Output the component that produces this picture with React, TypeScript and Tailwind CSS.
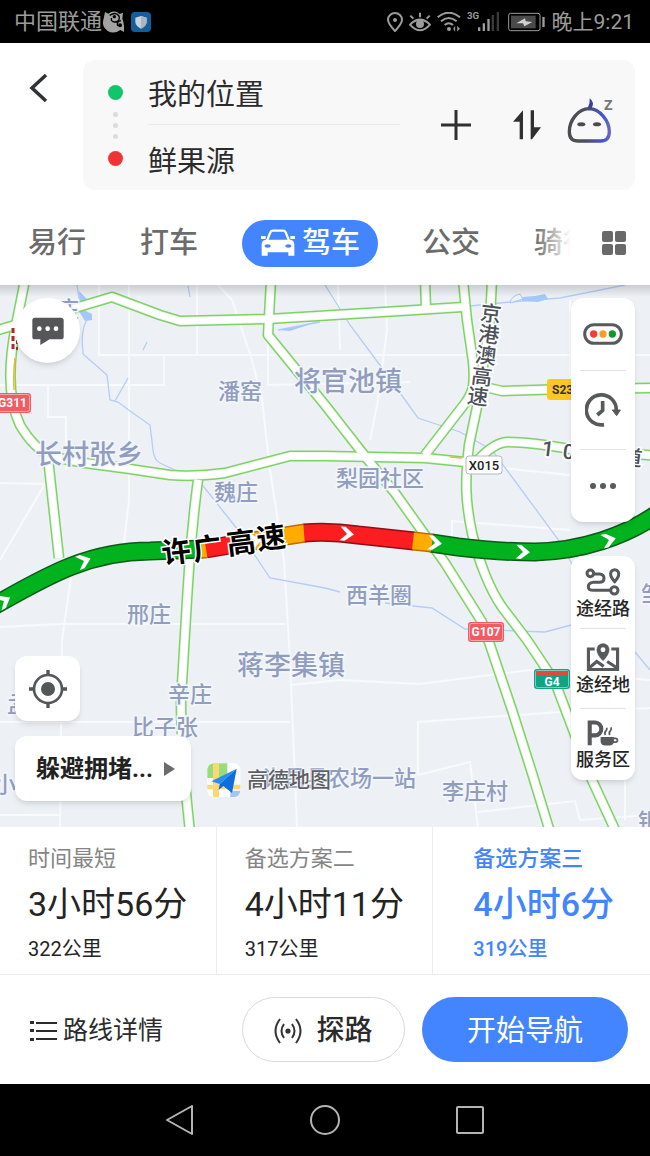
import { useState } from "react";
import clsx from "clsx";

const ROADS = [
  "M25 280 L16 325 C8 365 8 400 20 425 C30 442 38 448 48 456",
  "M-5 331 L15 325 L75 308 L112 297 L160 315 L180 321 L268 319 L400 311 L463 307",
  "M271 280 L268 335 L325 405 L368 460 L395 493 L445 563 L482 622 L491 648 L512 710 L532 773 L550 832",
  "M463 280 L467 320 L473 362 C475 385 473 392 466 402 L425 455",
  "M492 280 L490 320 L477 407 L469 445 C465 480 465 500 472 533 C478 560 490 590 502 607 L527 640 L555 682 L592 780 L616 832",
  "M48 456 L85 463 L130 469 L170 475 Q195 477 225 473 L290 456 L325 456 L425 458 L465 462 L478 460 Q495 442 508 442 Q530 442 570 449 L660 456",
  "M425 280 L426 308",
  "M48 458 L59 558",
  "M198 480 Q190 540 187 600 L181 700 Q181 750 190 832",
  "M485 387 L502 391 L570 389 L660 388",
];

const MINOR_ROADS = [
  "M99 285 V355 H650",
  "M129 285 V500 L122 560 L72 570 L62 640 L60 827",
  "M197 285 V355 M164 355 V385 L0 385 M48 385 V417 H66 V470",
  "M218 285 L232 300 L252 360 L262 400 L270 470 L284 560 L290 660 L297 827",
  "M268 335 V385 M268 385 L320 384 L410 382",
  "M338 285 L340 350 M385 285 L387 330 L378 400 L370 440",
  "M0 483 L45 484 M45 484 L0 560",
  "M0 627 L60 624 H285",
  "M0 722 H290 M60 815 H0",
  "M290 685 L340 680 L420 684 L530 670 L650 680",
  "M418 775 V722 L560 712 L650 708",
  "M418 775 L470 762 L478 827 M478 812 L575 801 L580 820 L650 815",
  "M452 540 V521 L570 530 M500 468 L570 475",
  "M570 300 V380 M625 720 V820",
];

const RIVERS = [
  "M77 285 L80 305 L88 318 Q80 330 83 352 L83 354 L107 375 L110 400 L118 402 L130 411 L150 425 L153 450 Q154 460 160 463 L200 482 L238 530 L258 560 L270 578 L325 588",
  "M115 401 L128 378 M143 350 L147 342 M188 286 L190 297",
  "M325 285 L350 325 L385 372 L418 418 L460 432 L492 450 L560 542 L578 575 M635 652 L650 670",
  "M430 310 L510 302 L560 298 L625 285",
  "M278 330 L320 322",
  "M325 588 L340 592 M385 603 L432 608 L465 629 L545 632 L575 624",
];

const ROUTE = [
  { d: "M-10 608 C40 580 85 551 150 551 L203 549", color: "#00b31e", edge: "#0a5a18" },
  { d: "M431 543 L458 547 Q500 552 535 552 C580 551 625 537 660 512", color: "#00b31e", edge: "#0a5a18" },
  { d: "M202 549 L207 549", color: "#ffab00", edge: "#c06c00" },
  { d: "M206 549 L248 542", color: "#fb1d20", edge: "#8d1014" },
  { d: "M247 542 L305 533", color: "#ffab00", edge: "#c06c00" },
  { d: "M304 533 Q330 531 358 535 L414 541", color: "#fb1d20", edge: "#8d1014" },
  { d: "M413 541 L432 543", color: "#ffab00", edge: "#c06c00" },
];

const ARROWS = [
  [4, 601, -30],
  [84, 561, -20],
  [255, 541, -10],
  [347, 534, 5],
  [435, 543, 6],
  [523, 552, 3],
  [609, 540, -14],
];

const PLACES = [
  { name: "将官池镇", x: 294, y: 391, big: true },
  { name: "长村张乡", x: 35, y: 464, big: true },
  { name: "蒋李集镇", x: 237, y: 675, big: true },
  { name: "潘窑", x: 218, y: 399 },
  { name: "魏庄", x: 214, y: 500 },
  { name: "梨园社区", x: 336, y: 486 },
  { name: "西羊圈", x: 346, y: 603 },
  { name: "邢庄", x: 127, y: 622 },
  { name: "辛庄", x: 168, y: 702 },
  { name: "比子张", x: 132, y: 735 },
  { name: "李庄村", x: 442, y: 799 },
  { name: "许昌县农场一站", x: 262, y: 786 },
  { name: "孟庄", x: 7, y: 712 },
  { name: "小V", x: -6, y: 792 },
  { name: "庄", x: 57, y: 317 },
  { name: "邹", x: 641, y: 602 },
  { name: "银", x: 638, y: 829 },
];

const ROAD_NAMES = [
  { char: "京", x: 491, y: 313 },
  { char: "港", x: 489, y: 334 },
  { char: "澳", x: 486, y: 355 },
  { char: "高", x: 482, y: 376 },
  { char: "速", x: 478, y: 396 },
  { char: "1", x: 548, y: 448 },
  { char: "0", x: 569, y: 451 },
  { char: "道", x: 632, y: 457 },
];

const ROUTE_NAME = [
  { char: "许", x: 176, y: 551 },
  { char: "广", x: 207, y: 548 },
  { char: "高", x: 241, y: 542 },
  { char: "速", x: 271, y: 537 },
];

const PLANS = [
  { label: "时间最短", time: "3小时56分", distance: "322公里" },
  { label: "备选方案二", time: "4小时11分", distance: "317公里" },
  { label: "备选方案三", time: "4小时6分", distance: "319公里" },
];

const Shield = ({ x, y, w, text, fill }: { x: number; y: number; w: number; text: string; fill: string }) => (
  <g>
    <rect x={x} y={y} width={w} height={20} rx={3} fill={fill} />
    <rect x={x + 1.5} y={y + 1.5} width={w - 3} height={17} rx={2} fill="none" stroke="#fff" strokeOpacity={0.45} />
    <text x={x + w / 2} y={y + 14} textAnchor="middle" fontSize={12} fontWeight={700} fill="#fff">
      {text}
    </text>
  </g>
);

const MapCanvas = () => (
  <svg
    className="absolute inset-0 h-full w-full"
    viewBox="0 285 650 542"
    preserveAspectRatio="xMidYMid slice"
    role="img"
    aria-label="路线地图"
  >
    <rect x={-400} y={0} width={1500} height={1200} fill="#edf1f6" />
    <g fill="none" stroke="#f8fafc" strokeWidth={2}>
      {MINOR_ROADS.map((d) => (
        <path key={d} d={d} />
      ))}
    </g>
    <g fill="none" stroke="#b4cdf6" strokeWidth={1.3}>
      {RIVERS.map((d) => (
        <path key={d} d={d} />
      ))}
    </g>
    <g fill="#a5c8fa">
      <path d="M79 291 L88 300 L84 310 L92 314 L92 320 L85 321 L80 313 Z" />
      <path d="M278 330 L290 328 L320 321 L290 331 Z" />
      <path d="M522 297 L535 296 L545 294 L548 299 L538 302 L522 301 Z" />
      <path d="M510 303 Q511 296 520 294 L523 299 Z" fill="#edf1f6" stroke="#a9c6f5" />
    </g>
    <g fill="none" strokeLinejoin="round">
      {ROADS.map((d) => (
        <path key={d} d={d} stroke="#7fd364" strokeWidth={11} />
      ))}
      {ROADS.map((d) => (
        <path key={d} d={d} stroke="#f1f6f3" strokeWidth={8} />
      ))}
      {ROADS.map((d) => (
        <path key={d} d={d} stroke="#fff" strokeWidth={6} />
      ))}
    </g>
    <path d="M15 358 Q13 375 14 390 M450 457 L462 458" fill="none" stroke="#f7b52c" strokeWidth={1.5} />
    <path d="M13 328 V350" stroke="#b3272d" strokeWidth={3} strokeDasharray="5 3" />
    <path d="M17 340 V350" stroke="#b3272d" strokeWidth={2} strokeDasharray="4 3" />

    <g fill="none">
      {ROUTE.map((s) => (
        <path key={s.d} d={s.d} stroke={s.edge} strokeWidth={19} />
      ))}
      {ROUTE.map((s) => (
        <path key={s.d} d={s.d} stroke={s.color} strokeWidth={16} />
      ))}
    </g>
    <g fill="#fff">
      {ARROWS.map(([x, y, r]) => (
        <path key={x} d="M-7 -7 H-2 L7 0 L-2 7 H-7 L0 0 Z" transform={`translate(${x} ${y}) rotate(${r})`} />
      ))}
    </g>

    <g fill="#919dbf" stroke="#f3f6fa" strokeWidth={3} paintOrder="stroke" fontWeight={500}>
      {PLACES.map((p) => (
        <text key={p.name} x={p.x} y={p.y} fontSize={p.big ? 27 : 22}>
          {p.name}
        </text>
      ))}
    </g>
    <g fill="#4d515a" stroke="#fff" strokeWidth={3} paintOrder="stroke" fontSize={21} fontWeight={500} textAnchor="middle">
      {ROAD_NAMES.map((c) => (
        <text key={c.char} x={c.x} y={c.y + 8} transform={`rotate(7 ${c.x} ${c.y})`}>
          {c.char}
        </text>
      ))}
    </g>
    <g fill="#000" stroke="#fff" strokeWidth={3} paintOrder="stroke" fontSize={29} fontWeight={700} textAnchor="middle">
      {ROUTE_NAME.map((c) => (
        <text key={c.char} x={c.x} y={c.y + 11} transform={`rotate(-7 ${c.x} ${c.y})`}>
          {c.char}
        </text>
      ))}
    </g>

    <Shield x={-6} y={393} w={37} text="G311" fill="#f35b63" />
    <Shield x={468} y={622} w={36} text="G107" fill="#f35b63" />
    <Shield x={534} y={669} w={36} text="" fill="#12a386" />
    <path d="M536 671 H568 V676 H536 Z" fill="#e04a3c" />
    <text x={552} y={686} textAnchor="middle" fontSize={12} fontWeight={700} fill="#fff">
      G4
    </text>
    <rect x={547} y={379} width={40} height={21} rx={3} fill="#fdc526" />
    <text x={552} y={394} fontSize={12} fontWeight={700} fill="#333">
      S237
    </text>
    <rect x={466} y={456} width={36} height={18} rx={3} fill="#fff" stroke="#b5b8bd" />
    <text x={484} y={470} textAnchor="middle" fontSize={13} fontWeight={500} fill="#222">
      X015
    </text>
  </svg>
);

const StatusBar = () => (
  <div className="flex h-[43px] items-center justify-between bg-black pr-4 pl-[14px] text-[#9c9c9c]">
    <div className="flex items-center">
      <span className="text-[22px] leading-6">中国联通</span>
      <svg width="22" height="22" viewBox="312 33 66 66" className="ml-[1px]">
        <path
          d="M318 36 L328 41 Q345 28 362 42 L372 38 L370 56 Q376 68 375 96 L364 90 Q344 104 325 92 Q308 80 313 60 Z"
          fill="#a3a3a3"
        />
        <path
          d="M332 46 Q350 34 360 48 Q364 66 346 66 Q334 64 338 54 M366 62 Q352 64 356 78"
          fill="none"
          stroke="#000"
          strokeWidth="4"
        />
        <circle cx="346" cy="50" r="5" fill="#000" />
        <circle cx="363" cy="76" r="6" fill="#000" />
      </svg>
      <svg width="20" height="20" viewBox="0 0 60 60" className="ml-[6px]">
        <rect width="60" height="60" rx="12" fill="#135f9c" />
        <path d="M30 12 L47 17 V30 Q46 43 30 50 Q14 43 13 30 V17 Z" fill="#c9d2da" />
        <path d="M30 12 L47 17 V30 Q46 43 30 50 Z" fill="#a9b5c0" />
      </svg>
    </div>
    <div className="flex items-center">
      <svg width="16" height="20" viewBox="184 36 48 60" fill="none" stroke="currentColor" strokeWidth="6">
        <path d="M208 93 Q187 70 187 59 A21 20 0 0 1 229 59 Q229 70 208 93 Z" />
        <circle cx="208" cy="60" r="6" fill="currentColor" stroke="none" />
      </svg>
      <svg width="22" height="20" viewBox="252 36 66 60" fill="none" stroke="currentColor" strokeWidth="6" className="ml-[6px]">
        <path d="M255 74 Q285 44 315 74 Q285 108 255 74 Z M285 52 V38 M265 56 L256 47 M305 56 L314 47" />
        <circle cx="285" cy="72" r="12" fill="currentColor" stroke="none" />
      </svg>
      <svg width="24" height="20" viewBox="335 36 72 60" fill="none" stroke="currentColor" strokeWidth="6" className="ml-[6px]">
        <path d="M337 52 Q370 24 404 52 M347 64 Q370 44 394 64 M358 75 Q370 64 383 75" />
        <circle cx="371" cy="87" r="6" fill="currentColor" stroke="none" />
        <path d="M384 86 L389 79 V94 Z M396 79 V94 L403 86 Z" fill="currentColor" strokeWidth="1" />
      </svg>
      <svg width="33" height="22" viewBox="424 33 99 66" className="ml-[6px]">
        <text x="424" y="58" fontSize="29" fontWeight="700" fill="currentColor" fontFamily="Roboto">
          3G
        </text>
        <path d="M457 93 V82 H464 V93 Z M471 93 V70 H478 V93 Z M485 93 V57 H492 V93 Z" fill="currentColor" />
        <path d="M498 93 V45 H505 V93 Z M513 93 V36 H520 V93 Z" fill="#3a3a3a" />
      </svg>
      <svg width="38" height="20" viewBox="547 36 114 60" className="ml-[8px]">
        <rect x="549" y="40" width="94" height="52" rx="6" fill="none" stroke="currentColor" strokeWidth="3" />
        <rect x="556" y="47" width="74" height="38" fill="#4a4a4a" />
        <path d="M650 51 H657 V81 H650 Z" fill="currentColor" />
        <path d="M572 70 L598 55 L600 64 L620 66 L596 79 L592 70 Z" fill="#d0d0d0" />
      </svg>
      <span className="ml-[6px] text-[21px] leading-6">晚上9:21</span>
    </div>
  </div>
);

const CarIcon = () => (
  <svg width="36" height="28" viewBox="784 86 102 84" fill="none">
    <path d="M800 126 L812 96 Q814 91 820 91 H850 Q856 91 858 96 L870 126" stroke="#fff" strokeWidth="7" />
    <path
      d="M784 107 H798 V116 H784 Z M872 107 H886 V116 H872 Z M798 118 H872 Q884 120 884 132 V166 H866 V156 H804 V166 H786 V132 Q786 120 798 118 Z"
      fill="#fff"
    />
    <ellipse cx="804" cy="137" rx="9" ry="5" fill="#4285ff" />
    <ellipse cx="866" cy="137" rx="9" ry="5" fill="#4285ff" />
  </svg>
);

const RouteForm = () => (
  <div className="flex pt-[17px] pr-[15px]">
    <button type="button" aria-label="返回" className="flex h-[58px] w-[83px] shrink-0 items-center pl-[28px]">
      <svg width="20" height="32" viewBox="0 0 20 32" fill="none" stroke="#303236" strokeWidth="3.5">
        <path d="M18 2 L4 15 L18 28" />
      </svg>
    </button>
    <div className="flex h-[130px] min-w-0 flex-1 items-center rounded-xl bg-[#f8f8f8] pr-[22px] pl-[25px]">
      <div className="flex shrink-0 flex-col items-center">
        <span className="h-[15px] w-[15px] rounded-full bg-[#12c46b]" />
        <div className="my-[12px] flex flex-col gap-[6px]">
          <span className="h-[5px] w-[5px] rounded-full bg-[#dcdcdc]" />
          <span className="h-[5px] w-[5px] rounded-full bg-[#dcdcdc]" />
          <span className="h-[5px] w-[5px] rounded-full bg-[#dcdcdc]" />
        </div>
        <span className="h-[15px] w-[15px] rounded-full bg-[#f23336]" />
      </div>
      <div className="ml-[25px] min-w-0 flex-1 text-[29px] text-[#2b2b2d]">
        <input
          aria-label="起点"
          defaultValue="我的位置"
          className="block h-[65px] w-full border-b border-[#e9e9e9] bg-transparent outline-none"
        />
        <input
          aria-label="终点"
          defaultValue="鲜果源"
          className="block h-[65px] w-full bg-transparent pt-[2px] outline-none"
        />
      </div>
      <div className="ml-[41px] flex items-center">
        <button type="button" aria-label="添加途经点">
          <svg width="30" height="30" viewBox="0 0 30 30" stroke="#303030" strokeWidth="3">
            <path d="M15 0 V30 M0 15 H30" />
          </svg>
        </button>
        <button type="button" aria-label="交换起终点" className="ml-[42px]">
          <svg width="28" height="30" viewBox="562 329 84 90" fill="#303030">
            <path d="M592 330 V417 H582 V364 H562 Z" />
            <path d="M615 330 H625 V381 H646 L619 417 H615 Z" />
          </svg>
        </button>
        <button type="button" aria-label="语音助手" className="ml-[26px] pb-[8px]">
          <svg width="46" height="46" viewBox="724 293 138 138" fill="none">
            <defs>
              <linearGradient id="bot" x1="0" x2="1">
                <stop offset="0" stopColor="#4c4c50" />
                <stop offset="0.45" stopColor="#4f4f66" />
                <stop offset="0.85" stopColor="#4253e0" />
                <stop offset="1" stopColor="#6a66b8" />
              </linearGradient>
            </defs>
            <path
              d="M790 325 C822 326 851 360 851 394 C851 413 843 422 824 422 H758 C739 422 731 412 731 394 C731 360 758 325 790 325 Z"
              stroke="url(#bot)"
              strokeWidth="10"
            />
            <path d="M786 324 Q794 310 792 294 Q808 306 798 324 Z" fill="#3b3f9c" />
            <ellipse cx="767" cy="372" rx="12" ry="6" fill="#4b4b50" />
            <ellipse cx="814" cy="372" rx="12" ry="6" fill="#4b4b50" />
            <text x="834" y="330" fontSize="54" fontWeight="500" fontFamily="Roboto" fill="#777">
              z
            </text>
          </svg>
        </button>
      </div>
    </div>
  </div>
);

const ModeTabs = () => {
  const [mode, setMode] = useState("驾车");

  return (
    <div className="relative flex flex-1 items-center pt-[11px]">
      <nav className="flex min-w-0 flex-1 items-center gap-[34px] overflow-hidden pl-[18px]">
        {["易行", "打车", "驾车", "公交", "骑行"].map((tab) => (
          <button
            key={tab}
            type="button"
            onClick={() => setMode(tab)}
            className={clsx(
              "flex h-[47px] shrink-0 items-center gap-[6px] text-[29px] leading-[46px] font-medium",
              mode === tab ? "rounded-full bg-[#4285ff] px-[18px] text-white" : "px-[10px] text-[#6c6c6c]",
            )}
          >
            {tab === "驾车" && <CarIcon />}
            {tab}
          </button>
        ))}
      </nav>
      <div className="relative flex w-[79px] shrink-0 justify-end bg-white pr-[24px]">
        <span className="absolute -top-3 right-full h-12 w-9 bg-linear-to-r from-white/0 to-white" />
        <button type="button" aria-label="更多出行方式">
          <svg width="24" height="24" viewBox="0 0 24 24" fill="#696969">
            <rect width="11" height="11" rx="2" />
            <rect x="13" width="11" height="11" rx="2" />
            <rect y="13" width="11" height="11" rx="2" />
            <rect x="13" y="13" width="11" height="11" rx="2" />
          </svg>
        </button>
      </div>
    </div>
  );
};

const MapTools = () => (
  <div className="absolute top-[13px] right-[15px] flex w-[64px] flex-col gap-[34px] text-[#58595b]">
    <div className="flex flex-col rounded-xl bg-white px-[9px] shadow-md">
      <button type="button" aria-label="实时路况" className="flex h-[72px] items-center justify-center">
        <svg width="40" height="22" viewBox="774 369 120 66">
          <rect x="779" y="374" width="110" height="56" rx="28" fill="none" stroke="currentColor" strokeWidth="9" />
          <circle cx="806" cy="402" r="11" fill="#ee3f32" />
          <circle cx="834" cy="402" r="11" fill="#fb9a2c" />
          <circle cx="862" cy="402" r="11" fill="#10982c" />
        </svg>
      </button>
      <button type="button" aria-label="出发时间" className="flex h-[80px] items-center justify-center border-y border-[#e3e3e3]">
        <svg width="36" height="36" viewBox="782 576 108 108" fill="none" stroke="currentColor" strokeWidth="11">
          <path d="M839 674 A45 45 0 1 1 876 630" />
          <path d="M864 630 H888 L877 647 Z" fill="currentColor" strokeWidth="3" />
          <path d="M835 603 V631 L819 645" />
        </svg>
      </button>
      <button type="button" aria-label="更多" className="flex h-[72px] items-center justify-center">
        <svg width="26" height="6" viewBox="0 0 26 6" fill="currentColor">
          <circle cx="3" cy="3" r="3" />
          <circle cx="13" cy="3" r="3" />
          <circle cx="23" cy="3" r="3" />
        </svg>
      </button>
    </div>

    <div className="flex flex-col rounded-xl bg-white text-[18px] leading-[22px] font-medium shadow-md">
      <button type="button" className="flex h-[72px] flex-col items-center pt-[12px]">
        <svg width="36" height="28" viewBox="781 413 108 84" fill="none" stroke="currentColor" strokeWidth="9">
          <circle cx="797" cy="429" r="10" />
          <path d="M807 431 H824 Q838 432 838 444 Q838 456 824 456 H806 Q791 458 791 469 Q791 480 806 480 H856" />
          <circle cx="869" cy="480" r="11" />
          <path d="M870 454 Q857 440 858 430 A12 12 0 0 1 882 430 Q883 440 870 454 Z" />
        </svg>
        <span className="mt-[2px] text-[#262626]">途经路</span>
      </button>
      <button type="button" className="flex h-[80px] flex-col items-center">
        <span className="mb-[13px] h-px w-[46px] bg-[#e3e3e3]" />
        <svg width="34" height="30" viewBox="787 6 98 86" fill="none" stroke="currentColor" strokeWidth="9">
          <path d="M812 26 H794 V85 H878 V26 H860 M794 82 L818 62 L838 76 M848 62 L876 80" />
          <path d="M836 60 Q818 42 818 28 A18 18 0 0 1 854 28 Q854 42 836 60 Z" fill="currentColor" strokeWidth="1" />
          <circle cx="836" cy="28" r="7" fill="#fff" stroke="none" />
        </svg>
        <span className="mt-[2px] text-[#262626]">途经地</span>
      </button>
      <button type="button" className="flex h-[72px] flex-col items-center">
        <span className="mb-[10px] h-px w-[46px] bg-[#e3e3e3]" />
        <svg width="32" height="28" viewBox="788 236 94 82" fill="none" stroke="currentColor" strokeWidth="12">
          <path d="M796 313 V246 H812 A18 19 0 0 1 812 284 H796" />
          <path d="M828 289 H867 V302 Q866 314 854 314 H841 Q829 314 828 302 Z" fill="currentColor" stroke="none" />
          <path d="M866 293 H872 A5 5 0 0 1 872 304 H864 M842 283 Q838 276 844 270 Q848 265 845 262 M855 283 Q851 276 857 270 Q861 264 858 260" strokeWidth="5" />
        </svg>
        <span className="mt-[2px] text-[#262626]">服务区</span>
      </button>
    </div>
  </div>
);

const AmapLogo = () => (
  <div className="flex items-center">
    <svg width="34" height="34" viewBox="622 365 102 102">
      <rect x="623" y="366" width="99" height="101" rx="18" fill="#fff" />
      <path d="M641 366 H683 V400 L660 410 H623 V384 Q625 368 641 366 Z" fill="#98dc7c" />
      <path d="M640 366 H658 V467 H640 Z M623 430 H722 V444 H623 Z" fill="#fbd776" />
      <path d="M692 448 H722 Q720 465 704 467 H692 Z" fill="#a5c3f5" />
      <path d="M711 382 L635 420 L660 428 Z" fill="#2b8cf0" />
      <path d="M711 382 L660 428 L657 446 L671 434 L697 455 Z" fill="#0c6fdd" />
    </svg>
    <span className="ml-[6px] text-[21px] leading-6 font-medium text-[#5c5f63] [text-shadow:0_0_2px_#fff,0_0_2px_#fff,0_0_2px_#fff]">
      高德地图
    </span>
  </div>
);

const MapView = () => (
  <div className="relative min-h-[510px] flex-1 overflow-hidden">
    <MapCanvas />
    <div className="absolute inset-x-0 top-0 h-3 bg-linear-to-b from-black/15 to-transparent" />
    <button
      type="button"
      aria-label="反馈"
      className="absolute top-[13px] left-[15px] flex h-[65px] w-[65px] items-center justify-center rounded-full bg-white shadow-md"
    >
      <svg width="32" height="28" viewBox="95 355 96 84">
        <path d="M103 357 H182 Q190 357 190 365 V414 Q190 422 182 422 H148 L120 439 V422 H103 Q96 422 96 414 V365 Q96 357 103 357 Z" fill="#555657" />
        <circle cx="117" cy="390" r="7" fill="#fff" />
        <circle cx="142" cy="390" r="7" fill="#fff" />
        <circle cx="167" cy="390" r="7" fill="#fff" />
      </svg>
    </button>
    <MapTools />
    <div className="absolute bottom-[26px] left-[15px] flex flex-col items-start gap-[15px]">
      <button
        type="button"
        aria-label="定位"
        className="flex h-[65px] w-[65px] items-center justify-center rounded-xl bg-white shadow-md"
      >
        <svg width="38" height="38" viewBox="0 0 114 114" fill="none" stroke="#555657" strokeWidth="8">
          <circle cx="57" cy="57" r="42" />
          <circle cx="57" cy="57" r="21" fill="#555657" stroke="none" />
          <path d="M57 0 V18 M57 96 V114 M0 57 H18 M96 57 H114" strokeWidth="10" />
        </svg>
      </button>
      <div className="flex items-end gap-[16px]">
        <button
          type="button"
          className="flex h-[65px] w-[176px] items-center justify-between rounded-xl bg-white pr-[16px] pl-[21px] shadow-md"
        >
          <span className="text-[24px] leading-8 font-bold text-[#222]">躲避拥堵...</span>
          <svg width="11" height="14" viewBox="0 0 11 14" fill="#6b6b6b">
            <path d="M0 0 L11 7 L0 14 Z" />
          </svg>
        </button>
        <div className="pb-[4px]">
          <AmapLogo />
        </div>
      </div>
    </div>
  </div>
);

const RoutePlans = () => {
  const [selected, setSelected] = useState(2);

  return (
    <div className="grid h-[148px] grid-cols-3 divide-x divide-[#ececec] border-b border-[#ececec] bg-white">
      {PLANS.map((plan, i) => (
        <button
          key={plan.label}
          type="button"
          onClick={() => setSelected(i)}
          className={clsx(
            "flex flex-col items-start pt-[18px]",
            i === 2 ? "pl-[40px]" : "pl-[28px]",
            selected === i ? "font-medium text-[#4285ff]" : "text-[#242424]",
          )}
        >
          <span className={clsx("text-[22px] leading-7", selected !== i && "text-[#858585]")}>{plan.label}</span>
          <span className="mt-[10px] text-[34px] leading-[42px]">{plan.time}</span>
          <span className="mt-[10px] text-[20px] leading-7">{plan.distance}</span>
        </button>
      ))}
    </div>
  );
};

const Actions = () => (
  <div className="flex h-[109px] items-center bg-white pr-[22px] pl-[30px] text-[#2b2b2d]">
    <button type="button" className="flex items-center gap-[6px] pt-[2px] text-[25px] leading-8">
      <svg width="27" height="20" viewBox="0 0 27 20" fill="#2b2b2d">
        <path d="M0 0 H4 V3 H0 Z M0 8 H4 V11 H0 Z M0 17 H4 V20 H0 Z M6 1 H27 V3 H6 Z M6 9 H27 V11 H6 Z M6 17 H27 V19 H6 Z" />
      </svg>
      路线详情
    </button>
    <button
      type="button"
      className="ml-auto flex h-[65px] w-[163px] items-center justify-center gap-[14px] rounded-full border border-[#d9d9d9] pt-[2px] text-[28px] leading-9 font-medium"
    >
      <svg width="28" height="26" viewBox="0 0 28 26" fill="none" stroke="#333" strokeWidth="2">
        <circle cx="14" cy="13" r="2.6" fill="#333" stroke="none" />
        <path d="M10 6 Q5 13 10 20 M18 6 Q23 13 18 20 M6 1 Q-3 13 6 25 M22 1 Q31 13 22 25" />
      </svg>
      探路
    </button>
    <button
      type="button"
      className="ml-[17px] h-[65px] w-[206px] rounded-full bg-[#4285ff] pt-[2px] text-[29px] leading-9 text-white"
    >
      开始导航
    </button>
  </div>
);

const SystemNav = () => (
  <div className="flex h-[72px] items-center justify-center gap-[115px] bg-black">
    <button type="button" aria-label="后退">
      <svg width="30" height="30" viewBox="0 0 30 30" fill="none" stroke="#b4b4b4" strokeWidth="2" strokeLinejoin="round">
        <path d="M27 1 V29 L2 15 Z" />
      </svg>
    </button>
    <button type="button" aria-label="主屏幕">
      <svg width="30" height="30" viewBox="0 0 30 30" fill="none" stroke="#b4b4b4" strokeWidth="2">
        <circle cx="15" cy="15" r="14" />
      </svg>
    </button>
    <button type="button" aria-label="最近任务">
      <svg width="30" height="30" viewBox="0 0 30 30" fill="none" stroke="#b4b4b4" strokeWidth="2">
        <rect x="2" y="2" width="26" height="26" rx="1" />
      </svg>
    </button>
  </div>
);

export default function App() {
  return (
    <div className="flex min-h-screen flex-col bg-white font-[Roboto,'Noto_Sans_CJK_SC',sans-serif]" lang="zh-CN">
      <StatusBar />
      <header className="flex h-[242px] flex-col bg-white">
        <RouteForm />
        <ModeTabs />
      </header>
      <MapView />
      <RoutePlans />
      <Actions />
      <SystemNav />
    </div>
  );
}
